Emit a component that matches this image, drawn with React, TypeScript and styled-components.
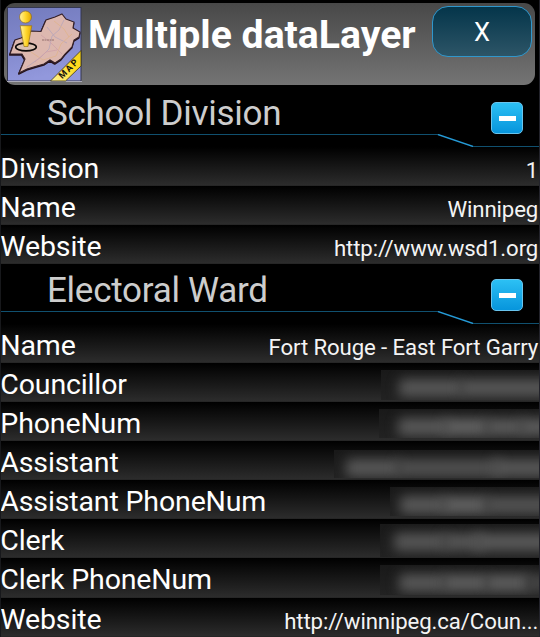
import React from 'react';
import styled, { createGlobalStyle } from 'styled-components';

const GlobalStyle = createGlobalStyle`
  *, *::before, *::after { box-sizing: border-box; }
  html, body { margin: 0; background: #000; overflow: hidden; }
  body { font-family: Roboto, "Liberation Sans", sans-serif; }
`;

const Screen = styled.main`
  width: 540px;
  height: 637px;
  overflow: hidden;
  background: #000;
  border-left: 1px solid #17181b;
  border-right: 1px solid #23232b;
`;

const Header = styled.header`
  display: flex;
  align-items: flex-start;
  height: 82px;
  margin: 3px 4px 2px 3px;
  padding: 4px 3px 0 3px;
  border-radius: 11px;
  background: linear-gradient(#484848, #747474);
`;

const MapIcon = styled.svg`
  flex: none;
  display: block;
  width: 75px;
  height: 75px;
`;

const Title = styled.h1`
  flex: 1;
  margin: 5px 0 0 6px;
  font-size: 39.2px;
  line-height: 46px;
  font-weight: 700;
  color: #fff;
  white-space: nowrap;
`;

const CloseButton = styled.button`
  flex: none;
  width: 100px;
  height: 51px;
  margin: -1px 0 0;
  padding: 0;
  border: 1.5px solid #3097cc;
  border-radius: 16px;
  background: linear-gradient(#04354a, #2d5567);
  color: #fff;
  font: 400 25.5px/50px Roboto, sans-serif;
`;

const SectionHead = styled.div`
  display: grid;
  grid-template-columns: 1fr auto;
  grid-template-rows: 46.8px 12.8px;
  height: 59.6px;
`;

const SectionTitle = styled.h2`
  margin: 0;
  padding-left: 46px;
  font-size: 35px;
  line-height: 53px;
  letter-spacing: -0.27px;
  font-weight: 400;
  color: #cdcdcd;
  white-space: nowrap;
`;

const Toggle = styled.button`
  display: grid;
  place-items: center;
  width: 32px;
  height: 32px;
  margin: 15px 16px 0 0;
  padding: 0;
  border: 1px solid #69c4ed;
  border-radius: 5px;
  background: linear-gradient(#2cc0f4, #0795dc);
`;

const Minus = styled.span`
  width: 17px;
  height: 5px;
  background: #fff;
`;

const Rule = styled.svg`
  grid-column: 1 / -1;
  display: block;
  width: 538px;
  height: 13px;
`;

const Row = styled.div`
  display: flex;
  justify-content: space-between;
  align-items: flex-start;
  height: 39.15px;
  border-bottom: 1px solid #262626;
  background: linear-gradient(#000, #2c2c2c);
`;

const Label = styled.span`
  margin-left: -0.7px;
  font-size: 28.5px;
  line-height: 43.6px;
  letter-spacing: -0.14px;
  color: #fff;
  white-space: nowrap;
`;

const Value = styled.span`
  padding-right: 0.8px;
  font-size: 22.2px;
  line-height: 47.6px;
  letter-spacing: -0.11px;
  color: #f4f4f4;
  white-space: nowrap;
`;

const Redacted = styled.span<{ $w: number; $h: number; $top: number }>`
  position: relative;
  flex: none;
  width: ${p => p.$w}px;
  height: ${p => p.$h}px;
  margin: ${p => p.$top}px -1px 0 0;
  overflow: hidden;
  background: linear-gradient(#191919, #222);
`;

const Smudge = styled.span<{ $x: number; $w: number; $c: string }>`
  position: absolute;
  left: ${p => p.$x - 5}px;
  top: 9px;
  width: ${p => p.$w + 10}px;
  height: 18px;
  border-radius: 4px;
  background: ${p => p.$c};
  filter: blur(6px);
`;

type Hidden = { w: number; h: number; top: number; marks: [number, number, string][] };
type Item = { label: string; value?: string; hidden?: Hidden };

const sections: { title: string; items: Item[] }[] = [
  {
    title: 'School Division',
    items: [
      { label: 'Division', value: '1' },
      { label: 'Name', value: 'Winnipeg' },
      { label: 'Website', value: 'http://www.wsd1.org' },
    ],
  },
  {
    title: 'Electoral Ward',
    items: [
      { label: 'Name', value: 'Fort Rouge - East Fort Garry' },
      { label: 'Councillor', hidden: { w: 159, h: 30, top: 7, marks: [[23, 54, '#565656'], [84, 92, '#565656']] } },
      { label: 'PhoneNum', hidden: { w: 161, h: 29, top: 7, marks: [[24, 41, '#575757'], [70, 34, '#606060'], [111, 29, '#585858'], [146, 30, '#5a5a5a']] } },
      { label: 'Assistant', hidden: { w: 206, h: 28, top: 9, marks: [[17, 45, '#565656'], [68, 94, '#4f4f4f'], [164, 60, '#565656']] } },
      { label: 'Assistant PhoneNum', hidden: { w: 150, h: 29, top: 7, marks: [[15, 37, '#575757'], [58, 35, '#606060'], [100, 60, '#525252']] } },
      { label: 'Clerk', hidden: { w: 160, h: 33, top: 5, marks: [[19, 43, '#555'], [68, 30, '#555'], [100, 70, '#585858']] } },
      { label: 'Clerk PhoneNum', hidden: { w: 160, h: 30, top: 7, marks: [[24, 37, '#565656'], [68, 35, '#5c5c5c'], [111, 34, '#5c5c5c'], [151, 26, '#444']] } },
      { label: 'Website', value: 'http://winnipeg.ca/Coun...' },
    ],
  },
];

const coast =
  'M55 7L59 12L67 15L66 21L73 25L72 30L67 33L65 40L58 47L54 52L48 56L43 53L37 57L30 59L20 62L12 66L18 52L15 47L3 47L8 33L14 31L20 28L24 24L34 24.5L39 13L48 10Z';

function Logo() {
  return (
    <MapIcon viewBox="0 0 75 75" aria-label="Map">
      <defs>
        <linearGradient id="sky" x1="0" y1="0" x2="0.2" y2="1">
          <stop offset="0" stopColor="#737bbd" />
          <stop offset="0.5" stopColor="#8087cb" />
          <stop offset="1" stopColor="#9298dc" />
        </linearGradient>
        <linearGradient id="gold" x1="0" x2="1">
          <stop offset="0" stopColor="#fff3a6" />
          <stop offset="0.5" stopColor="#ffd72e" />
          <stop offset="1" stopColor="#e2a600" />
        </linearGradient>
        <linearGradient id="ribbon" x1="0" y1="1" x2="1" y2="0">
          <stop offset="0" stopColor="#fff39b" />
          <stop offset="0.6" stopColor="#ffdc1f" />
          <stop offset="1" stopColor="#f5d31c" />
        </linearGradient>
      </defs>
      <rect x="0.5" y="0.5" width="73.5" height="73.5" fill="url(#sky)" stroke="#34374f" />
      <path d="M0 74.5H75" stroke="#a9a9b8" />
      <path d={coast} fill="#25131c" transform="translate(-0.3 1)" stroke="#25131c" strokeWidth="1.6" strokeLinejoin="round" />
      <path d={coast} fill="#ddb8af" stroke="#35212a" strokeWidth="1.1" />
      <g fill="none" strokeWidth="0.8">
        <path d="M57 13L52 23L45 29L42 42L34 50L20 60M40 20L48 30L60 36" stroke="#b6a4b9" />
        <path d="M47 14L57 22L62 30M24 45L36 53L49 49L54 37L65 27" stroke="#dfb38d" />
        <path d="M34 28L43 35L55 47M28 55L39 45L50 43" stroke="#cfa1a8" />
      </g>
      <path d="M35 33H47" stroke="#95706f" strokeWidth="1" strokeDasharray="2 .5" />
      <ellipse cx="19" cy="40" rx="10.3" ry="3.9" fill="#d8c9b8" fillOpacity="0.5" stroke="#0c0908" strokeWidth="1.6" />
      <path d="M13.2 18.7H24.8L21 39.5H17Z" fill="url(#gold)" stroke="#9b7617" strokeWidth="0.7" />
      <circle cx="18.5" cy="10" r="6" fill="url(#gold)" stroke="#8d6a24" strokeWidth="0.7" />
      <path d="M43.5 74L74 43.5V59L58.5 74Z" fill="url(#ribbon)" stroke="#3d3612" strokeWidth="0.8" />
      <text x="62.5" y="62" transform="rotate(-45 62.5 62)" textAnchor="middle" fontFamily="Roboto" fontSize="9" fontWeight="700" letterSpacing="1.7" dy="2.2" fill="#16120b">MAP</text>
    </MapIcon>
  );
}

export default function App() {
  return (
    <>
      <GlobalStyle />
      <Screen>
        <Header>
          <Logo />
          <Title>Multiple dataLayer</Title>
          <CloseButton>X</CloseButton>
        </Header>
        {sections.map(section => (
          <section key={section.title}>
            <SectionHead>
              <SectionTitle>{section.title}</SectionTitle>
              <Toggle aria-label={`Collapse ${section.title}`}><Minus /></Toggle>
              <Rule viewBox="0 0 538 13">
                <path d="M0 .5H437M472 12.5H538" fill="none" stroke="#10506f" />
                <path d="M437 .5L472 12.5" fill="none" stroke="#259ad6" strokeWidth="1.4" />
              </Rule>
            </SectionHead>
            {section.items.map(item => (
              <Row key={item.label}>
                <Label>{item.label}</Label>
                {item.hidden ? (
                  <Redacted $w={item.hidden.w} $h={item.hidden.h} $top={item.hidden.top}>
                    {item.hidden.marks.map(([x, w, c]) => <Smudge key={x} $x={x} $w={w} $c={c} />)}
                  </Redacted>
                ) : <Value>{item.value}</Value>}
              </Row>
            ))}
          </section>
        ))}
      </Screen>
    </>
  );
}
